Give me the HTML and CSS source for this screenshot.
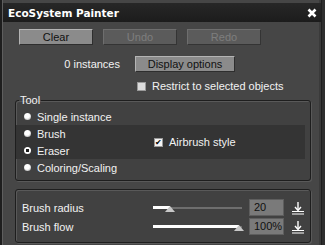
FILE: index.html
```html
<!DOCTYPE html>
<html lang="en">
<head>
    <meta charset="UTF-8">
    <title>EcoSystem Painter</title>
    <link rel="stylesheet" href="styles.css">
</head>
<body>
    <div class="window">
        <div class="titlebar">
            <span class="title">EcoSystem Painter</span>
            <svg class="close" width="10" height="10" viewBox="0 0 10 10">
                <path d="M1.5 1.5 L8.5 8.5 M8.5 1.5 L1.5 8.5" stroke="#fff" stroke-width="2.6"/>
            </svg>
        </div>

        <div class="button-row">
            <button class="btn">Clear</button>
            <button class="btn disabled">Undo</button>
            <button class="btn disabled">Redo</button>
        </div>

        <div class="info-row">
            <span class="count">0 instances</span>
            <button class="btn display">Display options</button>
        </div>

        <div class="check-row restrict">
            <span class="checkbox"></span>
            <span>Restrict to selected objects</span>
        </div>

        <fieldset class="group tool-group">
            <legend>Tool</legend>
            <div class="radio-row">
                <span class="radio"></span>
                <span>Single instance</span>
            </div>
            <div class="band">
                <div class="band-list">
                    <div class="radio-row">
                        <span class="radio"></span>
                        <span>Brush</span>
                    </div>
                    <div class="radio-row">
                        <span class="radio selected"></span>
                        <span>Eraser</span>
                    </div>
                </div>
                <div class="check-row airbrush">
                    <span class="checkbox checked">&#10004;</span>
                    <span>Airbrush style</span>
                </div>
            </div>
            <div class="radio-row">
                <span class="radio"></span>
                <span>Coloring/Scaling</span>
            </div>
        </fieldset>

        <div class="group brush-group">
            <div class="param-row">
                <span class="param-label">Brush radius</span>
                <div class="slider">
                    <div class="slider-fill" style="width: 17px"></div>
                    <span class="slider-handle" style="left: 17px"></span>
                </div>
                <span class="num-field">20</span>
                <svg class="spin" width="12" height="14" viewBox="0 0 12 14">
                    <path d="M6 1 V9" stroke="#fff" stroke-width="1.4"/>
                    <path d="M3 6 L6 9.5 L9 6" stroke="#fff" stroke-width="1.4" fill="none"/>
                    <path d="M0 10.5 H12 M0 13 H12" stroke="#fff" stroke-width="1.2"/>
                </svg>
            </div>
            <div class="param-row">
                <span class="param-label">Brush flow</span>
                <div class="slider">
                    <div class="slider-fill" style="width: 86px"></div>
                    <span class="slider-handle" style="left: 86px"></span>
                </div>
                <span class="num-field">100%</span>
                <svg class="spin" width="12" height="14" viewBox="0 0 12 14">
                    <path d="M6 1 V9" stroke="#fff" stroke-width="1.4"/>
                    <path d="M3 6 L6 9.5 L9 6" stroke="#fff" stroke-width="1.4" fill="none"/>
                    <path d="M0 10.5 H12 M0 13 H12" stroke="#fff" stroke-width="1.2"/>
                </svg>
            </div>
        </div>
    </div>
</body>
</html>
```

FILE: styles.css
```css
body {
    margin: 0;
    background-color: #2e2e2e;
    font-family: 'Liberation Sans', Arial, sans-serif;
    font-size: 11px;
    color: #f2f2f2;
}
.window {
    width: 322px;
    height: 245px;
    box-sizing: border-box;
    background-color: #464646;
    border-left: 2px solid #1e1e1e;
    border-right: 1px solid #1e1e1e;
    box-shadow: inset 1px 0 0 #5e5e5e, inset -2px 0 0 #3a3a3a;
    padding-top: 3px;
    overflow: hidden;
}
.titlebar {
    height: 19px;
    background: linear-gradient(#272727, #1c1c1c);
    display: flex;
    align-items: center;
    justify-content: space-between;
    padding: 0 4px 0 5px;
    margin-left: 1px;
}
.title {
    font-family: 'DejaVu Sans', Verdana, sans-serif;
    font-weight: bold;
    font-size: 10.5px;
    color: #ffffff;
}
.close {
    display: block;
}
button {
    font-family: 'Liberation Sans', Arial, sans-serif;
    font-size: 11px;
}
.btn {
    height: 16px;
    padding: 0;
    background-color: #8b8b8b;
    color: #111111;
    border: 1px solid;
    border-color: #b4b4b4 #2e2e2e #2e2e2e #b4b4b4;
    line-height: 14px;
}
.btn.disabled {
    background-color: #5b5b5b;
    color: #7e7e7e;
    border-color: #6e6e6e #343434 #343434 #6e6e6e;
}
.button-row {
    display: flex;
    gap: 10px;
    margin: 7px 0 0 17px;
}
.button-row .btn {
    width: 74px;
}
.info-row {
    display: flex;
    align-items: center;
    margin: 11px 0 0 0;
}
.count {
    width: 118px;
    text-align: right;
}
.btn.display {
    width: 100px;
    margin-left: 15px;
}
.check-row {
    display: flex;
    align-items: center;
    gap: 6px;
}
.restrict {
    margin: 8px 0 0 135px;
}
.checkbox {
    width: 9px;
    height: 9px;
    background-color: #dcdcdc;
    border: 1px solid #9a9a9a;
    box-sizing: border-box;
    color: #000000;
    font-size: 8px;
    line-height: 8px;
    text-align: center;
}
.checkbox.checked {
    background-color: #f4f4f4;
}
.group {
    width: 296px;
    box-sizing: border-box;
    margin-left: 13px;
    border: 1px solid #1e1e1e;
    border-radius: 3px;
    box-shadow: inset 1px 1px 0 #595959, 1px 1px 0 #595959;
    background-color: #414141;
}
.tool-group {
    margin-top: 3px;
    padding: 3px 0 4px 0;
    min-width: 0;
}
.tool-group legend {
    padding: 0 1px;
    margin-left: 3px;
    font-size: 11px;
    line-height: 10px;
}
.radio-row {
    display: flex;
    align-items: center;
    gap: 6px;
    height: 17px;
    padding-left: 8px;
}
.radio {
    width: 7px;
    height: 7px;
    border-radius: 50%;
    background: radial-gradient(circle at 45% 40%, #ffffff 0 40%, #bdbdbd 75%, #6a6a6a 100%);
}
.radio.selected {
    background: radial-gradient(circle, #1c1c1c 0 30%, #ffffff 38% 65%, #8c8c8c 100%);
}
.band {
    display: flex;
    align-items: center;
    background-color: #343434;
    margin-right: 5px;
}
.band-list {
    width: 138px;
}
.brush-group {
    margin-top: 8px;
    padding: 8px 0 6px 6px;
}
.param-row {
    display: flex;
    align-items: center;
    height: 19px;
}
.param-label {
    width: 131px;
}
.slider {
    position: relative;
    width: 89px;
    height: 2px;
    background-color: #6e6e6e;
}
.slider-fill {
    height: 3px;
    margin-top: -1px;
    background-color: #ffffff;
}
.slider-handle {
    position: absolute;
    top: -1px;
    width: 0;
    height: 0;
    margin-left: -5px;
    border-left: 5px solid transparent;
    border-right: 5px solid transparent;
    border-bottom: 6px solid #c8c8c8;
}
.num-field {
    width: 35px;
    height: 17px;
    box-sizing: border-box;
    margin-left: 7px;
    padding-left: 4px;
    background-color: #7a7a7a;
    border: 1px solid #5e5e5e;
    color: #101010;
    line-height: 15px;
    font-size: 11px;
}
.spin {
    margin-left: 8px;
}
```
